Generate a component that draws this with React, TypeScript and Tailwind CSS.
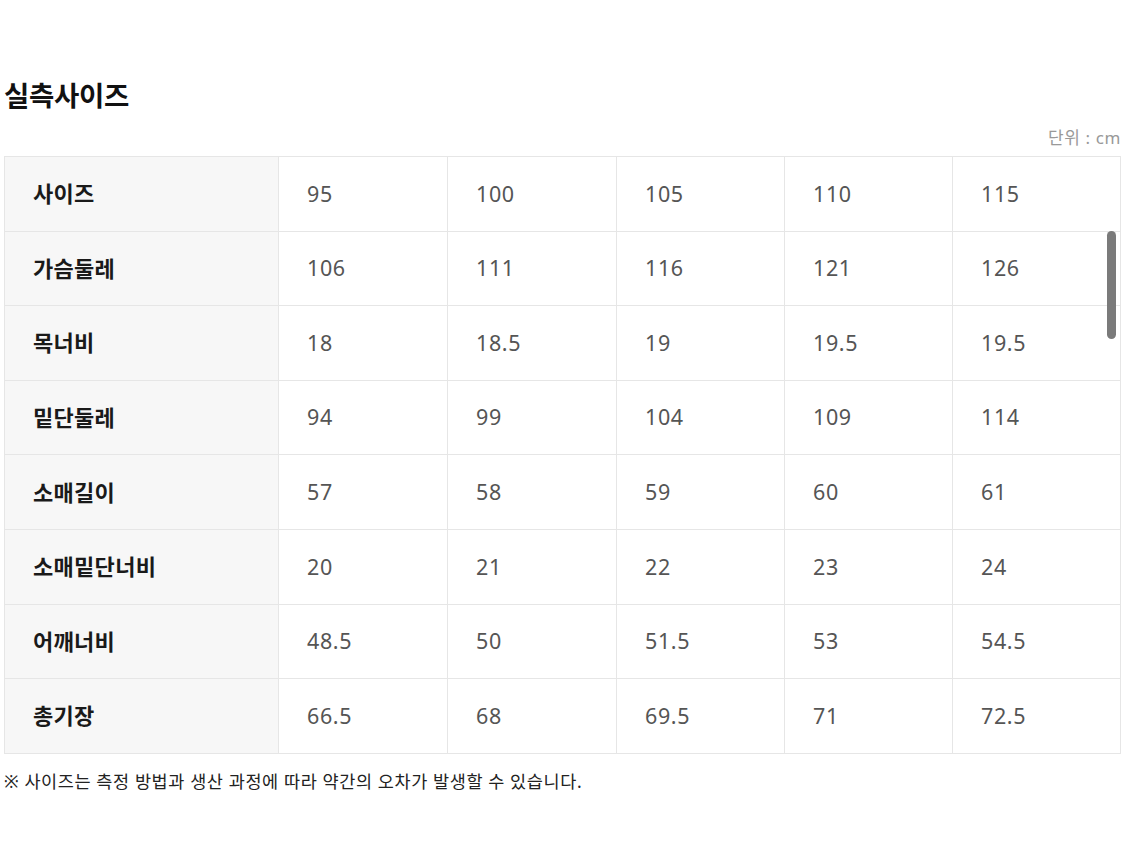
import React from "react";

const rows: [string, string[]][] = [
  ["사이즈", ["95", "100", "105", "110", "115"]],
  ["가슴둘레", ["106", "111", "116", "121", "126"]],
  ["목너비", ["18", "18.5", "19", "19.5", "19.5"]],
  ["밑단둘레", ["94", "99", "104", "109", "114"]],
  ["소매길이", ["57", "58", "59", "60", "61"]],
  ["소매밑단너비", ["20", "21", "22", "23", "24"]],
  ["어깨너비", ["48.5", "50", "51.5", "53", "54.5"]],
  ["총기장", ["66.5", "68", "69.5", "71", "72.5"]],
];

export default function App() {
  return (
    <div
      className="w-[1125px] h-[864px] bg-white relative"
      style={{ fontFamily: '"Noto Sans", "Noto Sans CJK KR", sans-serif' }}
    >
      <div className="pl-[4px] pr-[4px] pt-[77px]">
        <h2 className="text-[27.5px] leading-[38px] font-bold text-[#111] tracking-[-0.3px]">
          실측사이즈
        </h2>
        <div className="mt-[11px] text-right text-[17px] leading-[24px] text-[#999] tracking-[0.6px]">
          단위 : cm
        </div>
        <table className="mt-[6px] w-full border-collapse table-fixed">
          <colgroup>
            <col className="w-[274px]" />
            <col className="w-[169px]" />
            <col className="w-[169px]" />
            <col className="w-[168px]" />
            <col className="w-[168px]" />
            <col />
          </colgroup>
          <tbody>
            {rows.map(([label, vals]) => (
              <tr key={label} className="h-[74.6px]">
                <th className="border border-[#e6e6e6] bg-[#f7f7f7] text-left pl-[28px] text-[22px] font-bold text-[#1a1a1a] tracking-[0.3px]">
                  {label}
                </th>
                {vals.map((v, i) => (
                  <td
                    key={i}
                    className="border border-[#e6e6e6] pl-[28px] text-[21.5px] text-[#555] tracking-[0.6px]"
                  >
                    {v}
                  </td>
                ))}
              </tr>
            ))}
          </tbody>
        </table>
        <p className="mt-[15px] text-[17.5px] leading-[24px] text-[#222] tracking-[0.6px]">
          ※ 사이즈는 측정 방법과 생산 과정에 따라 약간의 오차가 발생할 수 있습니다.
        </p>
      </div>
      <div className="absolute left-[1107px] top-[231px] w-[9px] h-[108px] rounded-full bg-[#7a7a7a]" />
    </div>
  );
}
